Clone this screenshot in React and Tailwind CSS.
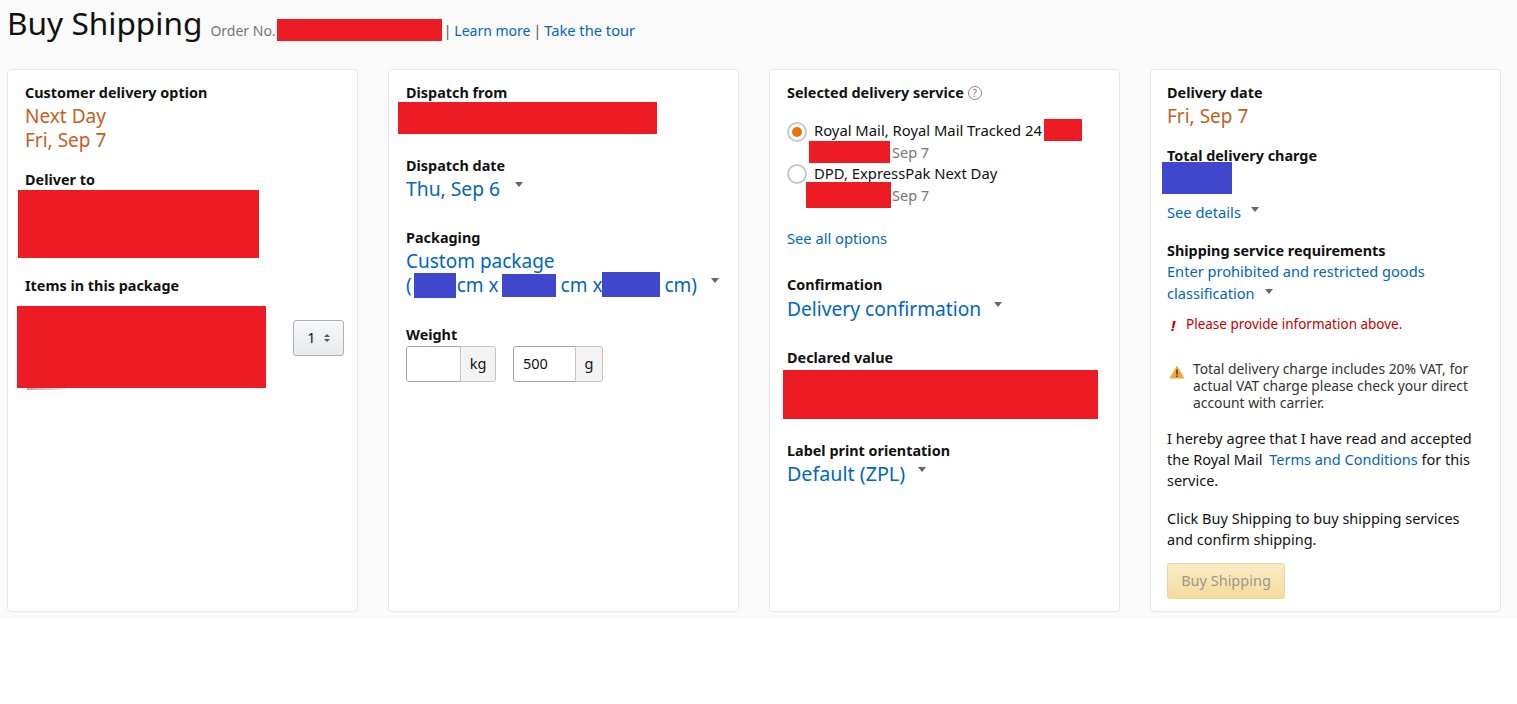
const Label = ({ children, className = '' }) => (
  <div className={`text-[14.4px] leading-[20px] font-bold text-[#111] ${className}`}>{children}</div>
);

const Big = ({ children, className = '', size = 'text-[19px]' }) => (
  <div className={`${size} leading-[24px] ${className}`}>{children}</div>
);

const Caret = ({ className = '' }) => (
  <span className={`inline-block w-0 h-0 border-x-[4px] border-x-transparent border-t-[5px] border-t-[#666] ${className}`} />
);

const Redact = ({ className = '' }) => <div className={`bg-[#ed1c24] shrink-0 ${className}`} />;
const RedactBlue = ({ className = '' }) => <div className={`bg-[#3f48cc] shrink-0 ${className}`} />;

const Card = ({ children, className = 'pl-[17px]' }) => (
  <div className={`w-[351px] h-[543px] shrink-0 bg-white border border-[#e7e7e7] rounded-[4px] pt-[13px] pr-[15px] ${className}`}>
    {children}
  </div>
);

const App = () => {
  return (
    <div className="min-h-[704px] bg-white text-[#111] font-['Noto_Sans',sans-serif]">
      <div className="h-[619px] bg-[#fafafa] px-[7px]">
        <div className="h-[69px] flex items-start">
          <h1 className="text-[31.6px] leading-[40px] mt-[3px] text-[#111]">Buy Shipping</h1>
          <div className="flex items-center h-[22px] mt-[19px] ml-[8px] text-[14px] text-[#767676]">
            <span>Order No.</span>
            <Redact className="w-[165px] h-[22px] ml-[1px]" />
            <span className="ml-[2px] text-[#555]">|</span>
            <a className="ml-[3px] text-[14px] text-[#0066c0]">Learn more</a>
            <span className="ml-[3px] text-[#555]">|</span>
            <a className="ml-[3px] text-[14.7px] text-[#0066c0]">Take the tour</a>
          </div>
        </div>

        <div className="flex gap-[30px]">
          <Card>
            <Label>Customer delivery option</Label>
            <Big className="text-[#c4601c] mt-px">Next Day</Big>
            <Big className="text-[#c4601c]">Fri, Sep 7</Big>
            <Label className="mt-[18px]">Deliver to</Label>
            <Redact className="w-[241px] h-[68px] -ml-[7px]" />
            <Label className="mt-[18px]">Items in this package</Label>
            <div className="flex items-start mt-[10px] -ml-[8px]">
              <Redact className="w-[249px] h-[82px]" />
              <button className="w-[51px] h-[36px] shrink-0 mt-[14px] ml-[27px] flex items-center justify-center gap-[8px] rounded-[3px] border border-[#adb1b8] bg-gradient-to-b from-[#f7f8fa] to-[#e7e9ec] text-[14.5px] text-[#111]">
                1
                <span className="flex flex-col gap-[2px]">
                  <span className="w-0 h-0 border-x-[3px] border-x-transparent border-b-[3px] border-b-[#555]" />
                  <span className="w-0 h-0 border-x-[3px] border-x-transparent border-t-[3px] border-t-[#555]" />
                </span>
              </button>
            </div>
            <div className="w-[38px] h-[2px] ml-[2px] bg-gradient-to-r from-[#aaaaaa] to-[#eeeeee]" />
          </Card>

          <Card>
            <Label>Dispatch from</Label>
            <Redact className="w-[259px] h-[32px] -ml-[8px] -mt-[1px]" />
            <Label className="mt-[22px]">Dispatch date</Label>
            <div className="flex items-start mt-[1px]">
              <Big size="text-[19.3px]" className="text-[#0066c0]">Thu, Sep 6</Big>
              <Caret className="ml-[15px] mt-[5px]" />
            </div>
            <Label className="mt-[27px]">Packaging</Label>
            <Big className="text-[#0066c0] mt-px">Custom package</Big>
            <div className="flex items-center h-[24px] text-[19px] leading-[24px] text-[#0066c0]">
              <span>(</span>
              <RedactBlue className="w-[42px] h-[25px] ml-[2px] mt-[1px]" />
              <span className="ml-[1px]">cm x</span>
              <RedactBlue className="w-[54px] h-[23px] ml-[3px]" />
              <span className="ml-[5px]">cm x</span>
              <RedactBlue className="w-[58px] h-[25px] -mt-[1px]" />
              <span className="ml-[4px]">cm)</span>
              <Caret className="ml-[14px] -mt-[9px]" />
            </div>
            <Label className="mt-[28px]">Weight</Label>
            <div className="flex mt-[1px]">
              <div className="w-[55px] h-[36px] bg-white border border-[#a6a6a6] rounded-l-[3px]" />
              <div className="w-[36px] h-[36px] -ml-px flex items-center justify-center bg-[#f3f3f3] border border-[#c4c4c4] rounded-r-[3px] text-[14.5px]">kg</div>
              <div className="w-[63px] h-[36px] ml-[17px] flex items-center pl-[9px] bg-white border border-[#a6a6a6] rounded-l-[3px] text-[14.5px]">500</div>
              <div className="w-[28px] h-[36px] -ml-px flex items-center justify-center bg-[#f3f3f3] border border-[#c4c4c4] rounded-r-[3px] text-[14.5px]">g</div>
            </div>
          </Card>

          <Card>
            <div className="flex items-center">
              <Label>Selected delivery service</Label>
              <span className="ml-[4px] w-[14px] h-[14px] rounded-full border border-[#888] text-[10px] leading-[12px] text-center text-[#777]">?</span>
            </div>
            <div className="flex items-start mt-[16px] h-[22px]">
              <span className="w-[20px] h-[20px] mt-[3px] shrink-0 rounded-full border-2 border-[#c8c8c8] bg-white flex items-center justify-center">
                <span className="w-[10px] h-[10px] rounded-full bg-[#e77600]" />
              </span>
              <span className="ml-[7px] mt-[1px] text-[14.8px] leading-[20px] whitespace-nowrap">Royal Mail, Royal Mail Tracked 24</span>
              <Redact className="w-[38px] h-[22px] ml-[2px]" />
            </div>
            <div className="flex items-center h-[22px]">
              <Redact className="w-[81px] h-[22px] ml-[22px]" />
              <span className="ml-[2px] mt-px text-[14.5px] text-[#767676]">Sep 7</span>
            </div>
            <div className="flex items-start h-[19px]">
              <span className="w-[20px] h-[20px] mt-[1px] shrink-0 rounded-full border-2 border-[#c8c8c8] bg-white" />
              <span className="ml-[7px] text-[14.8px] leading-[20px] whitespace-nowrap">DPD, ExpressPak Next Day</span>
            </div>
            <div className="flex items-center h-[26px]">
              <Redact className="w-[85px] h-[26px] ml-[19px]" />
              <span className="ml-[1px] mt-px text-[14.5px] text-[#767676]">Sep 7</span>
            </div>
            <div className="mt-[20px] text-[14.7px] leading-[20px] text-[#0066c0]">See all options</div>
            <Label className="mt-[27px]">Confirmation</Label>
            <div className="flex items-start mt-[2px]">
              <Big size="text-[19.2px]" className="text-[#0066c0]">Delivery confirmation</Big>
              <Caret className="ml-[13px] mt-[5px]" />
            </div>
            <Label className="mt-[27px]">Declared value</Label>
            <Redact className="w-[315px] h-[49px] -ml-[4px] mt-[2px]" />
            <Label className="mt-[22px]">Label print orientation</Label>
            <div className="flex items-start mt-[1px]">
              <Big size="text-[19.7px]" className="text-[#0066c0]">Default (ZPL)</Big>
              <Caret className="ml-[13px] mt-[5px]" />
            </div>
          </Card>

          <Card className="pl-[16px]">
            <Label>Delivery date</Label>
            <Big className="text-[#c4601c] mt-px">Fri, Sep 7</Big>
            <Label className="mt-[18px]">Total delivery charge</Label>
            <RedactBlue className="w-[70px] h-[32px] -ml-[5px] -mt-[4px]" />
            <div className="flex items-start mt-[8px]">
              <span className="text-[14.7px] leading-[20px] text-[#0066c0]">See details</span>
              <Caret className="ml-[10px] mt-[5px]" />
            </div>
            <Label className="mt-[19px]">Shipping service requirements</Label>
            <div className="text-[14.6px] leading-[21px] text-[#0066c0]">Enter prohibited and restricted goods</div>
            <div className="flex items-start h-[22px] mt-px">
              <span className="text-[14.6px] leading-[21px] text-[#0066c0]">classification</span>
              <Caret className="ml-[10px] mt-[6px]" />
            </div>
            <div className="flex items-center mt-[9px] h-[20px]">
              <span className="w-[6px] ml-[4px] text-[15px] font-bold italic text-[#c40000] leading-none mt-[3px]">!</span>
              <span className="ml-[9px] text-[13.5px] text-[#c40000]">Please provide information above.</span>
            </div>
            <div className="flex items-start mt-[26px]">
              <svg width="16" height="14" viewBox="0 0 16 14" className="mt-[5px] ml-[2px] shrink-0">
                <path d="M8 0.5 L15.5 13.5 L0.5 13.5 Z" fill="#f0a83c" />
                <rect x="7.2" y="4.5" width="1.6" height="5" fill="#5c4012" />
                <rect x="7.2" y="10.5" width="1.6" height="1.6" fill="#5c4012" />
              </svg>
              <div className="ml-[8px] text-[13.85px] leading-[17px] text-[#333]">
                Total delivery charge includes 20% VAT, for actual VAT charge please check your direct account with carrier.
              </div>
            </div>
            <p className="mt-[17px] text-[14.5px] leading-[21px] text-[#111]">
              I hereby agree that I have read and accepted the Royal Mail <a className="ml-[3px] text-[#0066c0]">Terms and Conditions</a> for this service.
            </p>
            <p className="mt-[17px] text-[14.5px] leading-[21px] text-[#111]">
              Click Buy Shipping to buy shipping services and confirm shipping.
            </p>
            <button className="mt-[13px] w-[118px] h-[36px] rounded-[3px] border border-[#e6d7a8] bg-gradient-to-b from-[#f9ebc5] to-[#f5dc9b] text-[14.5px] text-[#9a9a8e]">
              Buy Shipping
            </button>
          </Card>
        </div>
      </div>
    </div>
  );
};

export default App;
